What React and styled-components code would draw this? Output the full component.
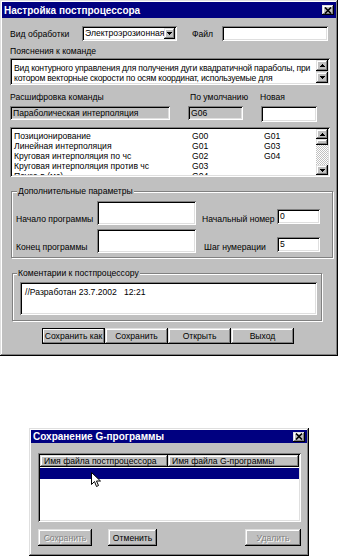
import React from 'react';
import styled, { createGlobalStyle, css } from 'styled-components';

const GlobalStyle = createGlobalStyle`
  html, body { margin: 0; padding: 0; background: #fff; }
  body { font-family: "Liberation Sans", Arial, sans-serif; font-size: 8.6px; color: #000; }
  * { box-sizing: border-box; }
`;

const raised = css`
  background: #c0c0c0;
  box-shadow: inset -1px -1px #000, inset 1px 1px #dfdfdf, inset -2px -2px #808080, inset 2px 2px #fff;
`;
const sunken = css`
  box-shadow: inset 1px 1px #808080, inset -1px -1px #fff, inset 2px 2px #000, inset -2px -2px #dfdfdf;
`;
const dither = `repeating-conic-gradient(#c0c0c0 0 25%, #fff 0 50%) 0 0 / 2px 2px`;

const Page = styled.div`
  width: 339px;
  height: 557px;
  display: flex;
  flex-direction: column;
  overflow: hidden;
`;

const Window = styled.div`
  ${raised}
  width: ${p => p.$w}px;
  height: ${p => p.$h}px;
  margin-left: ${p => p.$ml || 0}px;
  margin-top: ${p => p.$mt || 0}px;
  padding: 2px;
  display: flex;
  flex-direction: column;
  flex: none;
`;

const TitleBar = styled.div`
  height: ${p => p.$h}px;
  background: #000080;
  color: #fff;
  display: flex;
  align-items: center;
  justify-content: space-between;
  padding: 0 2px 0 2px;
  font-weight: bold;
  font-size: 10px;
  flex: none;
`;

const CloseBtn = styled.div`
  ${raised}
  width: 12px;
  height: 10px;
  display: flex;
  align-items: center;
  justify-content: center;
`;

const Body = styled.div`
  padding: 0 ${p => p.$pr}px 0 ${p => p.$pl}px;
  display: flex;
  flex-direction: column;
  flex: 1;
`;

const Row = styled.div`
  display: flex;
  align-items: ${p => p.$align || 'center'};
  height: ${p => p.$h}px;
  margin-top: ${p => p.$mt || 0}px;
  flex: none;
`;

const Label = styled.div`
  width: ${p => (p.$w ? p.$w + 'px' : 'auto')};
  margin-left: ${p => p.$ml || 0}px;
  padding-left: ${p => p.$pl || 0}px;
  height: 12px;
  line-height: 12px;
  white-space: nowrap;
  flex: none;
`;

const Field = styled.div`
  ${sunken}
  background: ${p => (p.$gray ? '#c0c0c0' : '#fff')};
  width: ${p => p.$w}px;
  height: ${p => p.$h}px;
  margin-left: ${p => p.$ml || 0}px;
  margin-bottom: ${p => p.$mb || 0}px;
  padding: 0 3px;
  line-height: ${p => p.$h}px;
  white-space: nowrap;
  overflow: hidden;
  flex: none;
`;

const Select = styled.div`
  ${sunken}
  background: #fff;
  width: ${p => p.$w}px;
  height: ${p => p.$h}px;
  display: flex;
  align-items: stretch;
  padding: 2px;
  flex: none;
`;

const SelectText = styled.div`
  flex: 1;
  padding-left: 1px;
  line-height: ${p => p.$h}px;
  white-space: nowrap;
  overflow: hidden;
`;

const ArrowBtn = styled.div`
  ${raised}
  width: ${p => p.$w || 12}px;
  display: flex;
  align-items: center;
  justify-content: center;
  flex: none;
`;

const TextBox = styled.div`
  ${sunken}
  background: #fff;
  height: ${p => p.$h}px;
  width: ${p => (p.$w ? p.$w + 'px' : 'auto')};
  margin-top: ${p => p.$mt || 0}px;
  margin-left: ${p => p.$ml || 0}px;
  padding: 2px;
  display: flex;
  flex: none;
`;

const TextLines = styled.div`
  flex: 1;
  padding: ${p => p.$pt || 3}px 0 0 ${p => p.$pl || 2}px;
  line-height: 10px;
  letter-spacing: ${p => p.$ls || 0}px;
  white-space: pre;
  overflow: hidden;
`;

const ScrollBar = styled.div`
  width: 12px;
  display: flex;
  flex-direction: column;
  justify-content: space-between;
  background: ${p => (p.$dither ? dither : '#c0c0c0')};
  flex: none;
`;

const ScrollBtn = styled.div`
  ${raised}
  height: ${p => p.$h}px;
  display: flex;
  align-items: center;
  justify-content: center;
  flex: none;
`;

const ScrollTop = styled.div`
  display: flex;
  flex-direction: column;
`;

const ListGrid = styled.div`
  flex: 1;
  padding: 2px 0 0 2px;
  display: grid;
  grid-template-columns: 178px 72px 1fr;
  grid-auto-rows: 10px;
  line-height: 10px;
  overflow: hidden;
  white-space: nowrap;
`;

const Group = styled.div`
  margin: ${p => p.$mt}px 0 0 ${p => p.$ml || 0}px;
  width: ${p => p.$w}px;
  height: ${p => p.$h}px;
  border: 1px solid #808080;
  box-shadow: 1px 1px 0 #fff, inset 1px 1px 0 #fff;
  display: flex;
  flex-direction: column;
  flex: none;
`;

const Legend = styled.div`
  align-self: flex-start;
  margin: -6px 0 0 ${p => p.$ml}px;
  padding: 0 1px;
  background: #c0c0c0;
  line-height: 10px;
  height: 10px;
  white-space: nowrap;
`;

const ParamGrid = styled.div`
  display: grid;
  grid-template-columns: 81px 99px 81px 43px;
  grid-auto-rows: 24px;
  row-gap: 4px;
  align-items: end;
  margin: 5px 0 0 4px;
`;

const ButtonRow = styled.div`
  display: flex;
  margin-top: ${p => p.$mt}px;
  margin-left: ${p => p.$ml || 0}px;
  flex: none;
`;

const Button = styled.div`
  ${raised}
  width: ${p => p.$w}px;
  height: ${p => p.$h}px;
  margin-left: ${p => (p.$auto ? 'auto' : (p.$ml || 0) + 'px')};
  display: flex;
  align-items: center;
  justify-content: center;
  white-space: nowrap;
  color: ${p => (p.$disabled ? '#808080' : '#000')};
  text-shadow: ${p => (p.$disabled ? '1px 1px 0 #fff' : 'none')};
  outline: ${p => (p.$default ? '1px solid #000' : 'none')};
  outline-offset: -1px;
  flex: none;
`;

const ListView = styled.div`
  ${sunken}
  background: #fff;
  position: relative;
  width: ${p => p.$w}px;
  height: ${p => p.$h}px;
  margin-top: ${p => p.$mt}px;
  padding: 2px;
  display: flex;
  flex-direction: column;
  flex: none;
`;

const HeaderRow = styled.div`
  display: flex;
  height: 12px;
  flex: none;
`;

const HeaderCell = styled.div`
  ${raised}
  width: ${p => (p.$w ? p.$w + 'px' : 'auto')};
  flex: ${p => (p.$w ? 'none' : '1')};
  padding-left: 4px;
  line-height: 12px;
  white-space: nowrap;
  overflow: hidden;
`;

const SelectedRow = styled.div`
  height: 11px;
  margin-top: 1px;
  background: #000080;
  flex: none;
`;

const Cursor = styled.svg`
  position: absolute;
  left: ${p => p.$x}px;
  top: ${p => p.$y}px;
`;

const Up = () => (
  <svg width="5" height="3" viewBox="0 0 5 3" shapeRendering="crispEdges">
    <rect x="2" y="0" width="1" height="1" fill="#000" />
    <rect x="1" y="1" width="3" height="1" fill="#000" />
    <rect x="0" y="2" width="5" height="1" fill="#000" />
  </svg>
);
const Down = () => (
  <svg width="5" height="3" viewBox="0 0 5 3" shapeRendering="crispEdges">
    <rect x="0" y="0" width="5" height="1" fill="#000" />
    <rect x="1" y="1" width="3" height="1" fill="#000" />
    <rect x="2" y="2" width="1" height="1" fill="#000" />
  </svg>
);
const XIcon = () => (
  <svg width="8" height="7" viewBox="0 0 8 7">
    <path d="M1 0.5 L7 6.5 M7 0.5 L1 6.5" stroke="#000" strokeWidth="1.6" />
  </svg>
);

const listRows = [
  ['Позиционирование', 'G00', 'G01'],
  ['Линейная интерполяция', 'G01', 'G03'],
  ['Круговая интерполяция по чс', 'G02', 'G04'],
  ['Круговая интерполяция против чс', 'G03', ''],
  ['Пауза в (мс)', 'G04', ''],
];

export default function App() {
  return (
    <Page>
      <GlobalStyle />
      <Window $w={338} $h={356}>
        <TitleBar $h={16}>
          <span>Настройка постпроцессора</span>
          <CloseBtn><XIcon /></CloseBtn>
        </TitleBar>
        <Body $pl={8} $pr={6}>
          <Row $h={15} $mt={8}>
            <Label $w={72}>Вид обработки</Label>
            <Select $w={95} $h={15}>
              <SelectText $h={11}>Электроэрозионная</SelectText>
              <ArrowBtn $w={11}><Down /></ArrowBtn>
            </Select>
            <Label $w={30} $ml={15}>Файл</Label>
            <Field $w={106} $h={15} />
          </Row>
          <Row $h={12} $mt={4}>
            <Label>Пояснения к команде</Label>
          </Row>
          <TextBox $h={27} $mt={1}>
            <TextLines $pt={3} $ls={-0.2}>
              {'Вид контурного управления для получения дуги квадратичной параболы, при\nкотором векторные скорости по осям координат, используемые для'}
            </TextLines>
            <ScrollBar>
              <ScrollBtn $h={11}><Up /></ScrollBtn>
              <ScrollBtn $h={11}><Down /></ScrollBtn>
            </ScrollBar>
          </TextBox>
          <Row $h={12} $mt={6}>
            <Label $w={180}>Расшифровка команды</Label>
            <Label $w={70}>По умолчанию</Label>
            <Label>Новая</Label>
          </Row>
          <Row $h={16} $mt={3} $align="flex-start">
            <Field $gray $w={160} $h={14}>Параболическая интерполяция</Field>
            <Field $gray $w={55} $h={14} $ml={18}>G06</Field>
            <Field $w={56} $h={16} $ml={18} />
          </Row>
          <TextBox $h={50} $mt={5}>
            <ListGrid>
              {listRows.map((r, i) => (
                <React.Fragment key={i}>
                  <span>{r[0]}</span>
                  <span>{r[1]}</span>
                  <span>{r[2]}</span>
                </React.Fragment>
              ))}
            </ListGrid>
            <ScrollBar $dither>
              <ScrollTop>
                <ScrollBtn $h={10}><Up /></ScrollBtn>
                <ScrollBtn $h={6} />
              </ScrollTop>
              <ScrollBtn $h={10}><Down /></ScrollBtn>
            </ScrollBar>
          </TextBox>
          <Group $mt={14} $ml={1} $w={322} $h={67}>
            <Legend $ml={5}>Дополнительные параметры</Legend>
            <ParamGrid>
              <Label>Начало программы</Label>
              <Field $w={99} $h={24} />
              <Label $pl={6}>Начальный номер</Label>
              <Field $w={43} $h={15} $mb={1}>0</Field>
              <Label>Конец программы</Label>
              <Field $w={99} $h={24} />
              <Label $pl={8}>Шаг нумерации</Label>
              <Field $w={43} $h={15} $mb={1}>5</Field>
            </ParamGrid>
          </Group>
          <Group $mt={15} $ml={2} $w={310} $h={48}>
            <Legend $ml={4}>Коментарии к постпроцессору</Legend>
            <TextBox $w={297} $h={33} $mt={4} $ml={7}>
              <TextLines $pt={3} $pl={3}>{'//Разработан 23.7.2002   12:21'}</TextLines>
            </TextBox>
          </Group>
          <ButtonRow $mt={7} $ml={32}>
            <Button $w={63} $h={16} $default>Сохранить как</Button>
            <Button $w={63} $h={16}>Сохранить</Button>
            <Button $w={63} $h={16}>Открыть</Button>
            <Button $w={63} $h={16}>Выход</Button>
          </ButtonRow>
        </Body>
      </Window>

      <Window $w={280} $h={128} $ml={29} $mt={72}>
        <TitleBar $h={13}>
          <span>Сохранение G-программы</span>
          <CloseBtn><XIcon /></CloseBtn>
        </TitleBar>
        <Body $pl={7} $pr={6}>
          <ListView $w={263} $h={69} $mt={10}>
            <HeaderRow>
              <HeaderCell $w={128}>Имя файла постпроцессора</HeaderCell>
              <HeaderCell>Имя файла G-программы</HeaderCell>
            </HeaderRow>
            <SelectedRow />
            <Cursor $x={53} $y={19} width="11" height="17" viewBox="0 0 11 17">
              <path d="M0.5 0.5 L0.5 12.5 L3.5 9.5 L5.5 14.5 L7.5 13.5 L5.5 9 L9.5 9 Z" fill="#fff" stroke="#000" strokeWidth="1" />
            </Cursor>
          </ListView>
          <ButtonRow $mt={7}>
            <Button $w={54} $h={17} $disabled>Сохранить</Button>
            <Button $w={49} $h={17} $ml={16}>Отменить</Button>
            <Button $w={56} $h={17} $auto $disabled>Удалить</Button>
          </ButtonRow>
        </Body>
      </Window>
    </Page>
  );
}
